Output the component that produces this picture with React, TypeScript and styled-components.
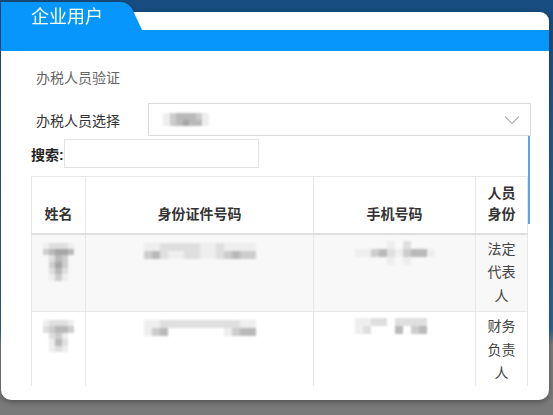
import styled, { createGlobalStyle } from 'styled-components';

const GlobalStyle = createGlobalStyle`
  html, body {
    margin: 0;
    padding: 0;
  }
  body {
    width: 553px;
    height: 415px;
    overflow: hidden;
    font-family: "Liberation Sans", "Noto Sans CJK SC", sans-serif;
    background: linear-gradient(
      to bottom,
      #174c80 0px,
      #22598c 120px,
      #2b6698 330px,
      #7e7e7e 345px,
      #7a7a7a 100%
    );
  }
`;

const Modal = styled.div`
  width: 548px;
  margin-left: 1px;
  padding-top: 2px;
  filter: drop-shadow(0 2px 3px rgba(0, 0, 0, 0.35));
`;

const Header = styled.div`
  display: flex;
  align-items: flex-end;
  height: 28px;
`;

const Tab = styled.div`
  position: relative;
  z-index: 1;
  flex: none;
  width: 118px;
  height: 28px;
  padding-left: 30px;
  box-sizing: border-box;
  background: #0796fb;
  color: #fff;
  font-size: 18px;
  line-height: 31px;
  white-space: nowrap;

  &::after {
    content: '';
    position: absolute;
    top: 0;
    left: 100px;
    width: 28px;
    height: 28px;
    background: #0796fb;
    border-top-right-radius: 8px;
    transform-origin: top left;
    transform: skewX(25deg);
    z-index: -1;
  }
`;

const Strip = styled.div`
  flex: 1;
  height: 18px;
  background: #fff;
  border-top-right-radius: 9px;
`;

const Bar = styled.div`
  height: 21px;
  background: #0796fb;
`;

const Body = styled.div`
  background: #fff;
  border-radius: 0 0 10px 10px;
  padding: 18px 18px 14px 29px;
`;

const Title = styled.div`
  padding-left: 6px;
  font-size: 14px;
  line-height: 18px;
  color: #666;
`;

const FormRow = styled.div`
  display: flex;
  align-items: center;
  margin-top: 16px;
`;

const Label = styled.div`
  width: 118px;
  padding-left: 6px;
  box-sizing: border-box;
  font-size: 14px;
  color: #333;
`;

const Select = styled.div`
  flex: 1;
  height: 33px;
  box-sizing: border-box;
  border: 1px solid #dadada;
  display: flex;
  align-items: center;
  justify-content: space-between;
  padding: 0 10px 0 14px;
`;

const Panel = styled.div`
  position: relative;
  height: 250px;
  overflow: hidden;
`;

const Thumb = styled.div`
  position: absolute;
  right: 1px;
  top: 0;
  width: 2px;
  height: 88px;
  background: #5aa3e8;
`;

const SearchRow = styled.div`
  display: flex;
  align-items: center;
  margin-top: 3px;
  padding-left: 1px;
`;

const SearchLabel = styled.span`
  font-size: 14px;
  font-weight: bold;
  color: #222;
`;

const SearchInput = styled.div`
  width: 195px;
  height: 29px;
  box-sizing: border-box;
  border: 1px solid #e2e2e2;
`;

const Table = styled.table`
  margin: 8px 0 0 1px;
  width: 496px;
  table-layout: fixed;
  border-collapse: collapse;
  font-size: 14px;
`;

const Th = styled.th`
  height: 57px;
  box-sizing: border-box;
  padding: 0 8px 8px;
  border: 1px solid #e8e8e8;
  border-bottom: 2px solid #dedede;
  vertical-align: bottom;
  text-align: center;
  line-height: 21px;
  color: #333;
  font-weight: bold;
`;

const Tr = styled.tr<{ $striped?: boolean }>`
  height: 77px;
  background: ${({ $striped }) => ($striped ? '#f8f8f8' : '#fff')};
`;

const Td = styled.td`
  box-sizing: border-box;
  padding: 3px 8px;
  border: 1px solid #e8e8e8;
  vertical-align: top;
  text-align: center;
  line-height: 23.5px;
  color: #444;
`;

const CellTop = styled.div<{ $offset: number }>`
  display: flex;
  justify-content: center;
  padding-top: ${({ $offset }) => $offset}px;
`;

const shades: Record<string, string> = {
  '.': 'transparent',
  '1': '#eeeeee',
  '2': '#dfdfdf',
  '3': '#cdcdcd',
  '4': '#b9b9b9',
  '5': '#a5a5a5',
};

const MosaicGrid = styled.div<{ $cols: number; $size: number }>`
  display: grid;
  grid-template-columns: repeat(${({ $cols }) => $cols}, ${({ $size }) => $size}px);
  grid-auto-rows: ${({ $size }) => $size}px;
  filter: blur(0.8px);
`;

const Cell = styled.div<{ $shade: string }>`
  background: ${({ $shade }) => shades[$shade] ?? 'transparent'};
`;

const Mosaic = ({ rows, size }: { rows: string[]; size: number }) => (
  <MosaicGrid $cols={rows[0].length} $size={size}>
    {rows.flatMap((r, i) => r.split('').map((c, j) => <Cell key={`${i}-${j}`} $shade={c} />))}
  </MosaicGrid>
);

const Chevron = () => (
  <svg width="16" height="10" viewBox="0 0 16 10" fill="none">
    <path d="M1 1.5 L8 8.5 L15 1.5" stroke="#b0b0b0" strokeWidth="1.2" />
  </svg>
);

const rows = [
  {
    name: ['12221', '34554', '.243.', '.353.', '.242.', '.131.'],
    id: ['11222221121111', '34211221123433'],
    phone: ['....1.2...', '1134213441', '....1.1...'],
    role: '法定代表人',
  },
  {
    name: ['12221', '23443', '.231.', '.142.', '.121.', '.....'],
    id: ['11222222222211', '134.......1344'],
    phone: ['1122.2222.', '12...4.34.'],
    role: '财务负责人',
  },
];

export default function App() {
  return (
    <>
      <GlobalStyle />
      <Modal>
        <Header>
          <Tab>企业用户</Tab>
          <Strip />
        </Header>
        <Bar />
        <Body>
          <Title>办税人员验证</Title>
          <FormRow>
            <Label>办税人员选择</Label>
            <Select>
              <Mosaic rows={['1344431', '1345441']} size={6.5} />
              <Chevron />
            </Select>
          </FormRow>
          <Panel>
            <SearchRow>
              <SearchLabel>搜索:</SearchLabel>
              <SearchInput />
            </SearchRow>
            <Table>
              <colgroup>
                <col style={{ width: 54 }} />
                <col style={{ width: 228 }} />
                <col style={{ width: 162 }} />
                <col style={{ width: 52 }} />
              </colgroup>
              <thead>
                <tr>
                  <Th>姓名</Th>
                  <Th>身份证件号码</Th>
                  <Th>手机号码</Th>
                  <Th>人员身份</Th>
                </tr>
              </thead>
              <tbody>
                {rows.map((r, i) => (
                  <Tr key={i} $striped={i % 2 === 0}>
                    <Td>
                      <CellTop $offset={5}>
                        <Mosaic rows={r.name} size={6.4} />
                      </CellTop>
                    </Td>
                    <Td>
                      <CellTop $offset={5}>
                        <Mosaic rows={r.id} size={8} />
                      </CellTop>
                    </Td>
                    <Td>
                      <CellTop $offset={3}>
                        <Mosaic rows={r.phone} size={8} />
                      </CellTop>
                    </Td>
                    <Td>{r.role}</Td>
                  </Tr>
                ))}
              </tbody>
            </Table>
            <Thumb />
          </Panel>
        </Body>
      </Modal>
    </>
  );
}
